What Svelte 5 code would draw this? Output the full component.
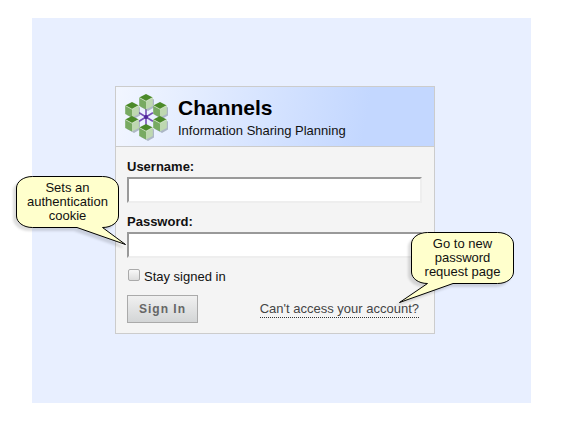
<script>
  let username = $state('');
  let password = $state('');
  let staySignedIn = $state(false);

  const cubes = [
    [21, 10],
    [7, 18],
    [35, 18],
    [7, 32],
    [35, 32],
    [21, 40]
  ];
</script>

<main>
  <div class="backdrop">
    <div class="card">
      <header>
        <svg class="logo" width="46" height="50" viewBox="0 0 46 50" aria-hidden="true">
          <g stroke="#7550b5" stroke-width="1.6" stroke-linecap="round">
            <path d="M21 17V33M14.5 21L27.5 29M27.5 21L14.5 29" />
          </g>
          <circle cx="21" cy="25" r="2" fill="#4d249b" />
          {#each cubes as [x, y]}
            <g transform="translate({x} {y})">
              <path d="M1 -6L8 -2.5V5.5L2 9L-5 5Z" fill="#53616f" opacity=".4" />
              <path d="M0 -8L6.8 -4.5L0 -.8L-6.8 -4.5Z" fill="#4b8a29" />
              <path d="M-6.8 -4.5L0 -.8V7.5L-6.8 4Z" fill="#78aa62" />
              <path d="M6.8 -4.5L0 -.8V7.5L6.8 4Z" fill="#bed8b0" />
              <path d="M-6.8 -4.5L0 -.8L6.8 -4.5" fill="none" stroke="#dcebd4" stroke-width=".7" />
            </g>
          {/each}
        </svg>
        <div>
          <h1>Channels</h1>
          <p>Information Sharing Planning</p>
        </div>
      </header>

      <form onsubmit={(event) => event.preventDefault()}>
        <label class="title" for="username">Username:</label>
        <input class="field" id="username" type="text" bind:value={username} />
        <label class="title" for="password">Password:</label>
        <input class="field" id="password" type="password" bind:value={password} />
        <div class="stay">
          <input id="stay" type="checkbox" bind:checked={staySignedIn} />
          <label for="stay">Stay signed in</label>
        </div>
        <div class="actions">
          <button type="submit">Sign In</button>
          <a href="#account">Can't access your account?</a>
        </div>
      </form>

      <aside class="callout cookie">
        <svg width="114" height="74" viewBox="0 0 114 74" aria-hidden="true">
          <path class="bubble" d="M16.5 .5H86.5C96 .5 102.5 6 102.5 12V40C102.5 46 96 51.5 86.5 51.5L109.5 68.5L61 51.5H16.5C7 51.5 .5 46 .5 40V12C.5 6 7 .5 16.5 .5Z" />
        </svg>
        <span>Sets an authentication cookie</span>
      </aside>
      <aside class="callout reset">
        <svg width="118" height="76" viewBox="-12 0 118 76" aria-hidden="true">
          <path class="bubble" d="M16.5 .5H86.5C96 .5 102.5 6 102.5 12V40C102.5 46 96 51.5 86.5 51.5H42L-11.5 70.5L16.5 51.5C7 51.5 .5 46 .5 40V12C.5 6 7 .5 16.5 .5Z" />
        </svg>
        <span>Go to new password request page</span>
      </aside>
    </div>
  </div>
</main>

<style>
  :global(body) {
    margin: 0;
    background: #fff;
  }
  main {
    box-sizing: border-box;
    padding: 18px 31px 20px 32px;
    font: 13px/16px "Liberation Sans", Arial, sans-serif;
    color: #111;
  }
  .backdrop {
    padding: 68px 96px 69px 83px;
    background: #e8efff;
  }
  .card {
    position: relative;
    border: 1px solid #ccc;
    background: #f4f4f4;
  }
  header {
    display: flex;
    gap: 7px;
    padding: 5px 9px 4px;
    border-bottom: 1px solid #ccc;
    background: linear-gradient(100deg, #f2f6ff 0%, #c3d7ff 78%);
  }
  .logo {
    flex: none;
  }
  h1 {
    margin: 4px 0 3px;
    font-size: 21px;
    line-height: 24px;
    color: #000;
  }
  p {
    margin: 0;
  }
  form {
    padding: 12px 12px 10px 11px;
  }
  .title {
    display: block;
    margin-bottom: 2px;
    font-weight: bold;
  }
  .field {
    box-sizing: border-box;
    display: block;
    width: 100%;
    height: 26px;
    margin: 0 0 11px;
    padding: 2px 4px;
    border: 2px solid #eee;
    border-top-color: #999;
    border-left-color: #999;
    background: #fff;
    font: inherit;
  }
  .stay {
    display: flex;
    align-items: flex-start;
    gap: 4px;
  }
  .stay input {
    appearance: none;
    box-sizing: border-box;
    width: 12px;
    height: 12px;
    margin: 0 0 0 1px;
    border: 1px solid #aaa;
    border-radius: 2px;
    background: linear-gradient(#f8f8f8, #ddd);
  }
  .stay input:checked {
    background: #777;
  }
  .actions {
    display: flex;
    justify-content: space-between;
    align-items: center;
    padding: 10px 3px 0 0;
  }
  button {
    height: 28px;
    padding: 0 11px;
    border: 1px solid #aaa;
    background: linear-gradient(#f0f0f0, #d3d5d6);
    color: #666;
    font: bold 12px/16px "Liberation Sans", Arial, sans-serif;
    letter-spacing: 1px;
  }
  a {
    border-bottom: 1px dotted #333;
    color: #444;
    text-decoration: none;
  }
  .callout {
    position: absolute;
    width: 103px;
    color: #111;
    line-height: 14px;
    text-align: center;
  }
  .callout svg {
    position: absolute;
    top: 0;
    left: 0;
    overflow: visible;
    filter: drop-shadow(-3px 3px 1px #0002);
  }
  .callout span {
    position: relative;
    display: block;
    padding: 5px 10px;
  }
  .bubble {
    fill: #ffc;
    stroke: #000;
    stroke-width: 1;
  }
  .cookie {
    top: 89px;
    left: -100px;
  }
  .reset {
    top: 145px;
    right: -80px;
  }
  .reset svg {
    left: -12px;
  }
</style>
